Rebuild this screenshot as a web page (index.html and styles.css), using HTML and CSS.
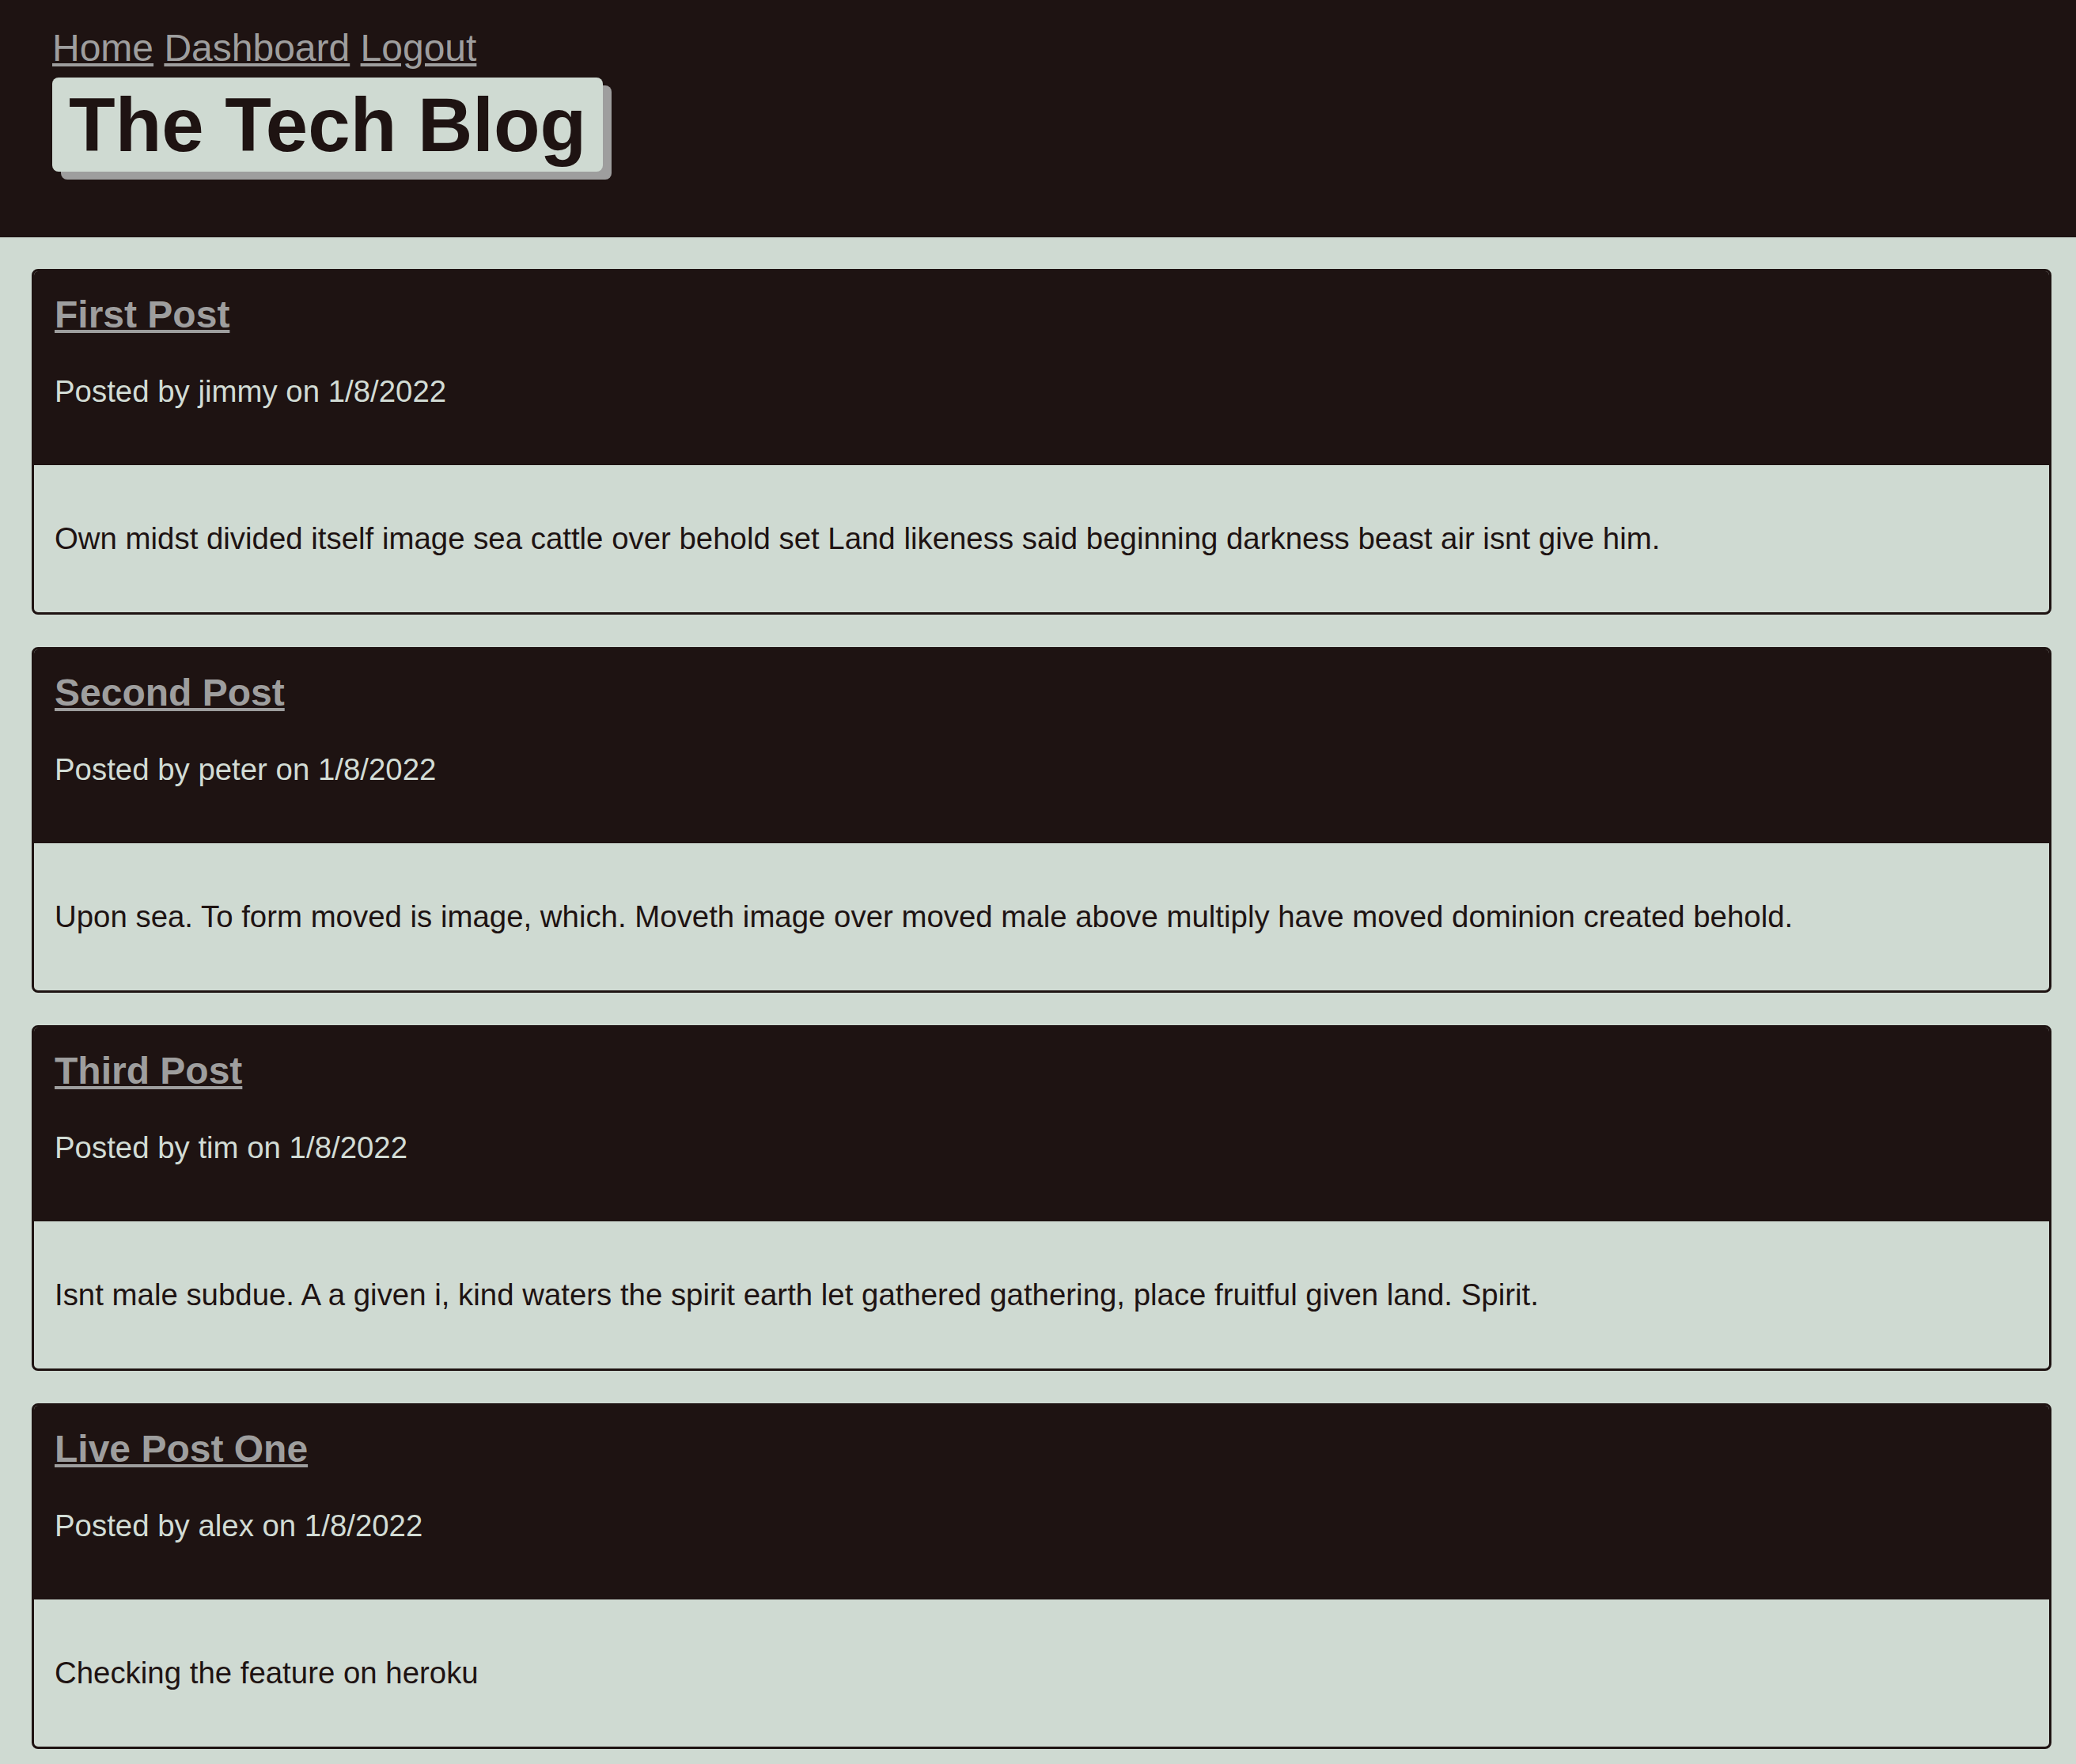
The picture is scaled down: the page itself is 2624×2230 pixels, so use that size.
FILE: index.html
```html
<!DOCTYPE html>
<html lang="en">
<head>
<meta charset="utf-8">
<title>The Tech Blog</title>
<link rel="stylesheet" href="styles.css">
</head>
<body>
<header class="site-header">
  <nav class="nav">
    <a href="#">Home</a>
    <a href="#">Dashboard</a>
    <a href="#">Logout</a>
  </nav>
  <h1 class="brand">The Tech Blog</h1>
</header>
<main class="posts">
  <article class="post">
    <div class="post-head">
      <h2 class="post-title"><a href="#">First Post</a></h2>
      <p class="post-meta">Posted by jimmy on 1/8/2022</p>
    </div>
    <div class="post-body">
      <p>Own midst divided itself image sea cattle over behold set Land likeness said beginning darkness beast air isnt give him.</p>
    </div>
  </article>
  <article class="post">
    <div class="post-head">
      <h2 class="post-title"><a href="#">Second Post</a></h2>
      <p class="post-meta">Posted by peter on 1/8/2022</p>
    </div>
    <div class="post-body">
      <p>Upon sea. To form moved is image, which. Moveth image over moved male above multiply have moved dominion created behold.</p>
    </div>
  </article>
  <article class="post">
    <div class="post-head">
      <h2 class="post-title"><a href="#">Third Post</a></h2>
      <p class="post-meta">Posted by tim on 1/8/2022</p>
    </div>
    <div class="post-body">
      <p>Isnt male subdue. A a given i, kind waters the spirit earth let gathered gathering, place fruitful given land. Spirit.</p>
    </div>
  </article>
  <article class="post">
    <div class="post-head">
      <h2 class="post-title"><a href="#">Live Post One</a></h2>
      <p class="post-meta">Posted by alex on 1/8/2022</p>
    </div>
    <div class="post-body">
      <p>Checking the feature on heroku</p>
    </div>
  </article>
</main>
</body>
</html>
```
FILE: styles.css
```css
* { box-sizing: border-box; }

html, body {
  margin: 0;
  padding: 0;
  background: #cfdad2;
  font-family: "Liberation Sans", Arial, Helvetica, sans-serif;
  color: #1e1312;
}

.site-header {
  background: #1e1312;
  height: 300px;
  padding: 33px 0 0 66px;
}

.nav {
  font-size: 48px;
  line-height: 55px;
  margin-bottom: 10px;
}

.nav a {
  color: #9e9e9e;
  text-decoration: underline;
}

.brand {
  display: inline-block;
  margin: 0;
  padding: 0 21px;
  font-size: 96px;
  line-height: 119px;
  font-weight: 700;
  color: #1e1312;
  background: #cfdad2;
  border-radius: 8px;
  box-shadow: 11px 10px 0 #9e9e9e;
}

.posts {
  padding: 40px 31px 18px 40px;
  display: flex;
  flex-direction: column;
  gap: 41px;
}

.post {
  border: 3px solid #1e1312;
  border-radius: 8px;
  overflow: hidden;
  background: #cfdad2;
}

.post-head {
  background: #1e1312;
  padding: 27px 26px 71px;
}

.post-title {
  margin: 0 0 47px;
  font-size: 48px;
  line-height: 55px;
  font-weight: 700;
}

.post-title a {
  color: #9e9e9e;
  text-decoration: underline;
}

.post-meta {
  margin: 0;
  font-size: 38.4px;
  line-height: 45px;
  color: #d2dcd5;
}

.post-body {
  padding: 70px 26px 71px;
}

.post-body p {
  margin: 0;
  font-size: 38.4px;
  line-height: 45px;
  color: #1e1312;
}
```
